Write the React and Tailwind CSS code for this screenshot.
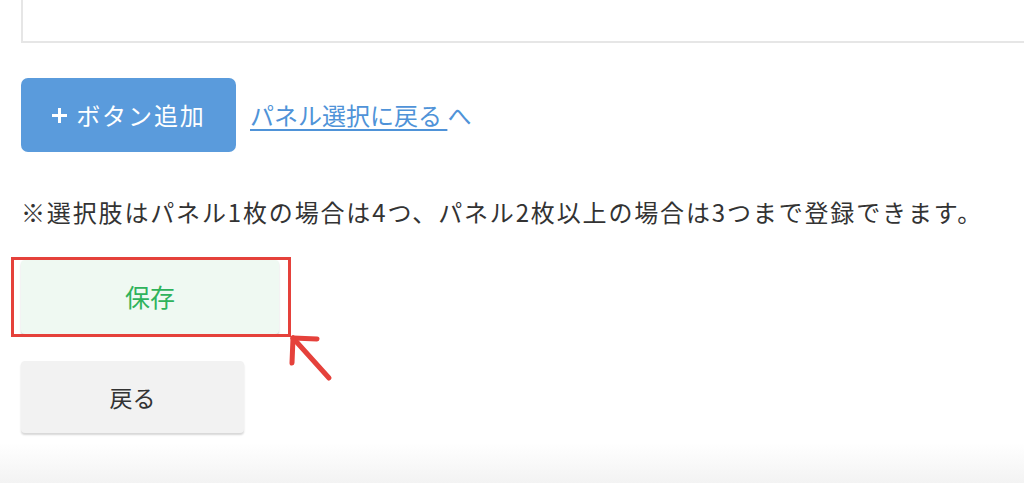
export default function App() {
  return (
    <div
      className="relative w-[1024px] h-[483px] overflow-hidden bg-white text-[#333]"
      style={{ fontFamily: '"Noto Sans CJK JP", "Noto Sans", sans-serif' }}
    >
      {/* bottom fade */}
      <div className="absolute left-0 right-0 bottom-0 h-[40px] bg-gradient-to-b from-white to-[#f3f3f3]" />

      <div className="relative pl-[21px]">
        {/* panel edge from above */}
        <div className="h-[43px] -mr-[10px] border-l-2 border-b-2 border-[#e6e6e6]" />

        {/* add button + back to panel link */}
        <div className="flex items-center gap-[14px] mt-[35px]">
          <button className="w-[215px] h-[74px] rounded-[7px] bg-[#5a9bdc] text-white text-[24px] tracking-[0.08em] flex items-center justify-center">
            <svg className="mr-[8px]" width="17" height="17" viewBox="0 0 17 17">
              <path d="M8.5 1 V16 M1 8.5 H16" stroke="white" strokeWidth="3" />
            </svg>
            ボタン追加
          </button>
          <a className="text-[#4f93d8] text-[24px] leading-none">
            <span className="underline underline-offset-[4px] decoration-[1.5px]">パネル選択に戻る </span>
            へ
          </a>
        </div>

        {/* note */}
        <p className="mt-[48px] text-[24px] leading-none tracking-[1.85px]">
          ※選択肢はパネル1枚の場合は4つ、パネル2枚以上の場合は3つまで登録できます。
        </p>

        {/* save button with red highlight */}
        <div className="relative mt-[36px] w-[258px]">
          <button className="w-[258px] h-[74px] rounded-[4px] bg-[#eff9f2] text-[#2fb35c] text-[25px] shadow-[0_2px_2px_rgba(0,0,0,0.18)] flex items-center justify-center">
            保存
          </button>
          <div className="absolute left-[-10px] top-[-3px] w-[280px] h-[80px] border-[3px] border-[#e5413b] pointer-events-none" />
          <svg className="absolute left-[268px] top-[74px]" width="50" height="50" viewBox="0 0 50 50">
            <g stroke="#e5413b" strokeWidth="5" strokeLinecap="round" fill="none">
              <path d="M4 4 L40 44" />
              <path d="M4 4 L28 5" />
              <path d="M4 4 L3 29" />
            </g>
          </svg>
        </div>

        {/* back button */}
        <button className="mt-[27px] w-[223px] h-[72px] rounded-[4px] bg-[#f2f2f2] text-[#333] text-[23px] shadow-[0_2px_2px_rgba(0,0,0,0.16)] flex items-center justify-center">
          戻る
        </button>
      </div>
    </div>
  );
}
